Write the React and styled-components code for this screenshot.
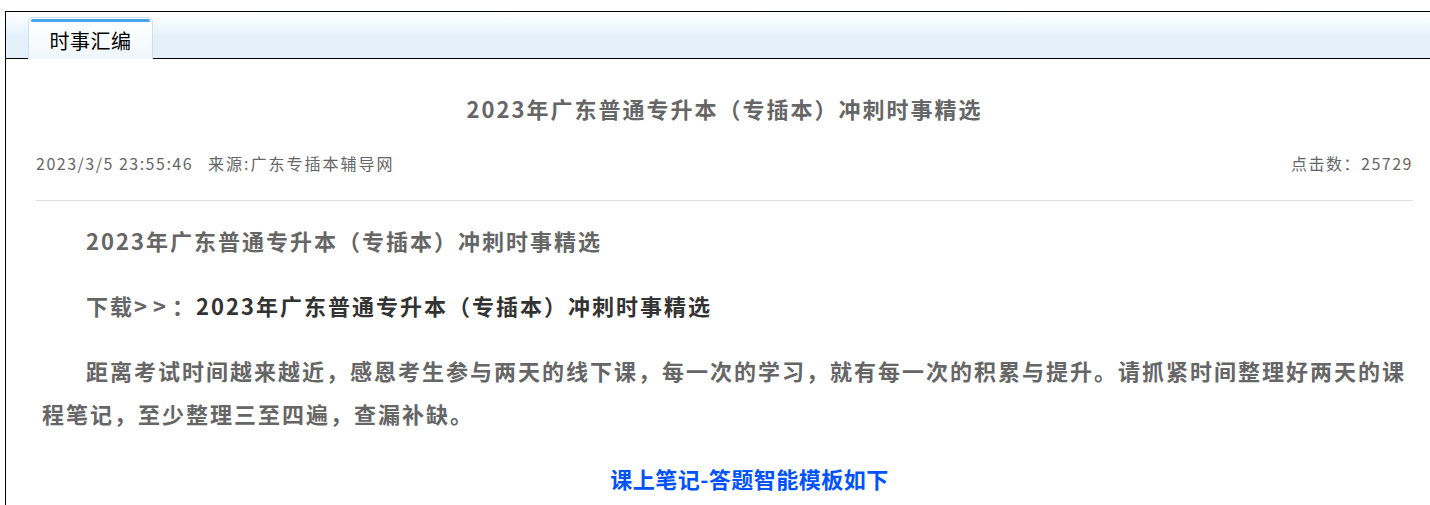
import React from "react";
import styled, { createGlobalStyle } from "styled-components";

const GlobalStyle = createGlobalStyle`
  html, body {
    margin: 0;
    padding: 0;
    background: #fff;
    overflow: hidden;
  }
  body {
    font-family: "Noto Sans CJK SC", "Noto Sans", sans-serif;
  }
`;

const Frame = styled.div`
  box-sizing: border-box;
  margin: 11px 0 0 5px;
  width: 1438px;
  min-height: calc(100vh - 11px);
  border: 1px solid #000;
  border-right: none;
  border-bottom: none;
`;

const Header = styled.div`
  height: 46px;
  display: flex;
  align-items: flex-end;
  padding-left: 22px;
  border-bottom: 1px solid #000;
  background: linear-gradient(to bottom, #ffffff 0px, #f6fbfe 8px, #e4f1fb 24px, #e4f1fb 100%);
`;

const Tab = styled.div`
  position: relative;
  box-sizing: border-box;
  width: 125px;
  height: 42px;
  margin-bottom: -1px;
  border: 1px solid #cfdfec;
  border-bottom: none;
  border-radius: 5px 5px 0 0;
  background: linear-gradient(to bottom, #ffffff 0%, #f7fbfe 60%, #eef6fc 100%);
  display: flex;
  align-items: center;
  justify-content: center;
  padding-top: 3px;
  font-size: 20px;
  color: #000;
  letter-spacing: 0.5px;

  &::before {
    content: "";
    position: absolute;
    top: 1px;
    left: 2px;
    right: 2px;
    height: 3px;
    border-radius: 2px;
    background: #4aa4ea;
  }
`;

const Body = styled.div`
  padding: 0 30px;
`;

const Title = styled.h1`
  margin: 34px 0 0;
  text-align: center;
  font-size: 22px;
  line-height: 30px;
  font-weight: bold;
  letter-spacing: 2px;
  color: #666;
`;

const Meta = styled.div`
  margin-top: 28px;
  display: flex;
  justify-content: space-between;
  align-items: center;
  font-size: 16px;
  line-height: 24px;
  letter-spacing: 1.5px;
  color: #666;
  padding-bottom: 25px;
  border-bottom: 1px solid #dedede;
`;

const MetaLeft = styled.div`
  display: flex;
  gap: 15px;
`;

const Source = styled.span`
  letter-spacing: 2px;
`;

const Article = styled.div`
  padding: 18px 0 0 6px;
`;

const Para = styled.p`
  margin: 0 0 22px;
  text-indent: 2em;
  font-size: 22px;
  line-height: 43px;
  font-weight: bold;
  letter-spacing: 2px;
  color: #666;
  text-align: ${(p) => (p.$center ? "center" : "left")};

  &:last-child {
    margin-bottom: 0;
  }
`;

const Arrows = styled.span`
  letter-spacing: 6px;
`;

const Dark = styled.span`
  color: #333;
`;

const Blue = styled.span`
  color: #0052ff;
  letter-spacing: 0.5px;
`;

export default function App() {
  return (
    <>
      <GlobalStyle />
      <Frame>
        <Header>
          <Tab>时事汇编</Tab>
        </Header>
        <Body>
          <Title>2023年广东普通专升本（专插本）冲刺时事精选</Title>
          <Meta>
            <MetaLeft>
              <span>2023/3/5 23:55:46</span>
              <Source>来源:广东专插本辅导网</Source>
            </MetaLeft>
            <span>点击数：25729</span>
          </Meta>
          <Article>
            <Para>2023年广东普通专升本（专插本）冲刺时事精选</Para>
            <Para>
              下载<Arrows>&gt;&gt;</Arrows>：<Dark>2023年广东普通专升本（专插本）冲刺时事精选</Dark>
            </Para>
            <Para>
              距离考试时间越来越近，感恩考生参与两天的线下课，每一次的学习，就有每一次的积累与提升。请抓紧时间整理好两天的课程笔记，至少整理三至四遍，查漏补缺。
            </Para>
            <Para $center>
              <Blue>课上笔记-答题智能模板如下</Blue>
            </Para>
          </Article>
        </Body>
      </Frame>
    </>
  );
}
